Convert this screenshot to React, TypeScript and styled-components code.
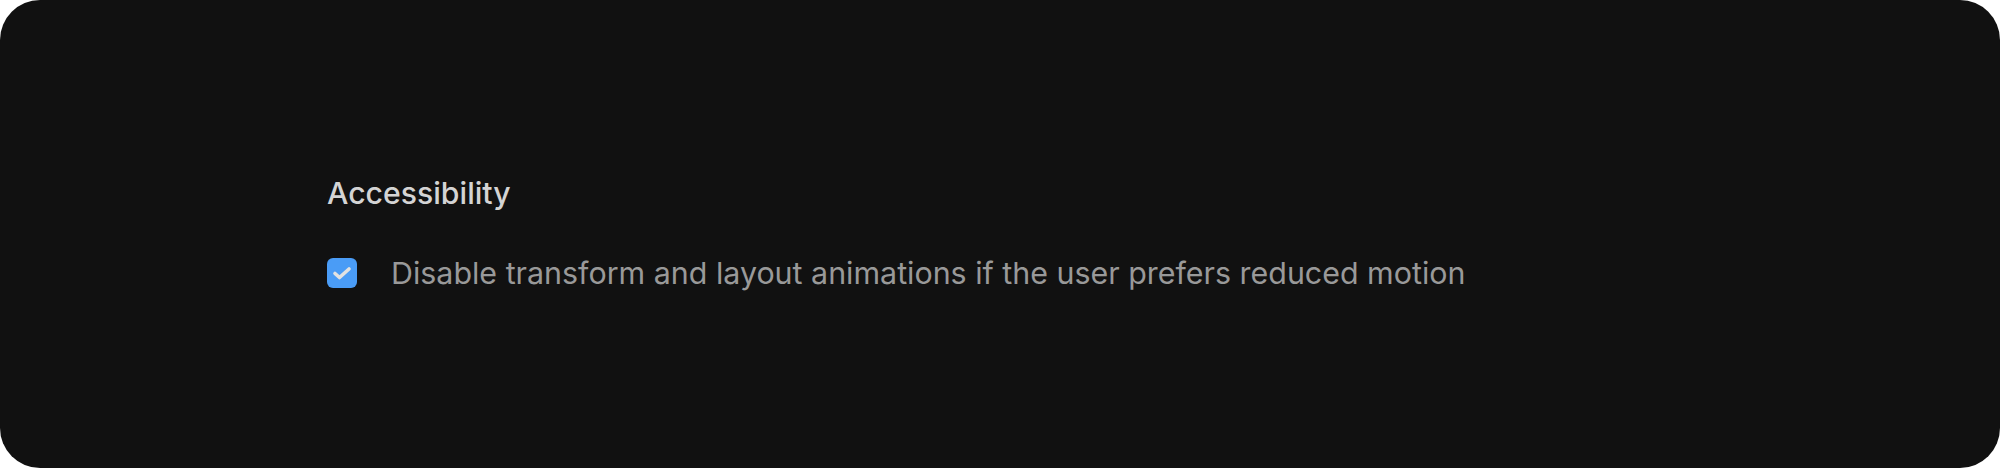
import React from "react";
import styled, { createGlobalStyle } from "styled-components";

const Global = createGlobalStyle`
  html, body { margin: 0; padding: 0; background: #ffffff; }
  body { font-family: Inter, "Noto Sans", sans-serif; }
`;

const Card = styled.div`
  width: 2000px;
  height: 468px;
  box-sizing: border-box;
  background: #111111;
  border-radius: 40px;
  display: flex;
  flex-direction: column;
  justify-content: center;
  padding: 0 0 2px 327px;
`;

const Section = styled.div`
  display: flex;
  flex-direction: column;
  gap: 44px;
`;

const Heading = styled.h2`
  margin: 0;
  font-size: 30.2px;
  font-weight: 450;
  color: #d4d4d4;
  line-height: 36px;
`;

const Row = styled.label`
  display: flex;
  align-items: center;
  gap: 34px;
`;

const Box = styled.span<{ $checked: boolean }>`
  width: 30px;
  height: 30px;
  border-radius: 6px;
  background: ${(p) => (p.$checked ? "#4a9cf6" : "transparent")};
  display: flex;
  align-items: center;
  justify-content: center;
  flex-shrink: 0;
`;

const Label = styled.span`
  font-size: 30.4px;
  color: #999999;
  line-height: 36px;
`;

export default function App() {
  return (
    <>
      <Global />
      <Card>
        <Section>
          <Heading>Accessibility</Heading>
          <Row>
            <Box $checked>
              <svg width="24" height="24" viewBox="0 0 24 24" fill="none">
                <path d="M5 12.5 L9.5 16.5 L19 8" stroke="#e2e2e2" strokeWidth="3.6" strokeLinecap="round" strokeLinejoin="round" />
              </svg>
            </Box>
            <Label>Disable transform and layout animations if the user prefers reduced motion</Label>
          </Row>
        </Section>
      </Card>
    </>
  );
}
